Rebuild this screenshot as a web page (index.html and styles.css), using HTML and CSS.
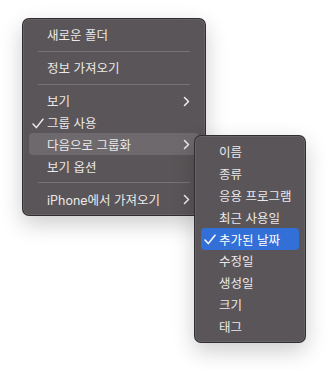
FILE: index.html
```html
<!DOCTYPE html>
<html>
<head>
  <title>메뉴</title>
  <link rel="stylesheet" href="styles.css">
</head>
<body>
  <div class="stage">
    <div class="menu main-menu">
      <div class="item">새로운 폴더</div>
      <div class="sep"></div>
      <div class="item">정보 가져오기</div>
      <div class="sep"></div>
      <div class="item">보기
        <svg class="chev" width="7" height="11" viewBox="0 0 7 11"><path d="M1.5 1.5 L5.5 5.5 L1.5 9.5" fill="none" stroke="currentColor" stroke-width="1.6" stroke-linecap="round" stroke-linejoin="round"/></svg>
      </div>
      <div class="item">
        <svg class="check" width="12" height="11" viewBox="0 0 12 11"><path d="M1 6 L4.3 9.6 L11 1.2" fill="none" stroke="currentColor" stroke-width="1.5" stroke-linecap="round" stroke-linejoin="round"/></svg>
        그룹 사용
      </div>
      <div class="item hover">다음으로 그룹화
        <svg class="chev" width="7" height="11" viewBox="0 0 7 11"><path d="M1.5 1.5 L5.5 5.5 L1.5 9.5" fill="none" stroke="currentColor" stroke-width="1.6" stroke-linecap="round" stroke-linejoin="round"/></svg>
      </div>
      <div class="item">보기 옵션</div>
      <div class="sep"></div>
      <div class="item">iPhone에서 가져오기
        <svg class="chev" width="7" height="11" viewBox="0 0 7 11"><path d="M1.5 1.5 L5.5 5.5 L1.5 9.5" fill="none" stroke="currentColor" stroke-width="1.6" stroke-linecap="round" stroke-linejoin="round"/></svg>
      </div>
    </div>

    <div class="menu sub-menu">
      <div class="item">이름</div>
      <div class="item">종류</div>
      <div class="item">응용 프로그램</div>
      <div class="item">최근 사용일</div>
      <div class="item selected">
        <svg class="check" width="12" height="11" viewBox="0 0 12 11"><path d="M1 6 L4.3 9.6 L11 1.2" fill="none" stroke="currentColor" stroke-width="1.5" stroke-linecap="round" stroke-linejoin="round"/></svg>
        추가된 날짜
      </div>
      <div class="item">수정일</div>
      <div class="item">생성일</div>
      <div class="item">크기</div>
      <div class="item">태그</div>
    </div>
  </div>
</body>
</html>
```

FILE: styles.css
```css
body {
  margin: 0;
  background-color: white;
  font-family: Inter, "Noto Sans CJK KR", sans-serif;
  font-size: 12.5px;
  color: #ebe9ea;
}

.stage {
  position: relative;
  width: 328px;
  height: 370px;
  padding: 18px 0 0 22px;
  box-sizing: border-box;
}

.menu {
  background-color: #5a5558;
  border: 1px solid rgba(0, 0, 0, 0.45);
  border-radius: 7px;
  box-shadow: inset 0 0 0 1px rgba(255, 255, 255, 0.08), 0 8px 22px rgba(0, 0, 0, 0.2);
  box-sizing: border-box;
  padding: 5px 6px;
  display: flex;
  flex-direction: column;
}

.main-menu {
  width: 184px;
  height: 198px;
}

.sub-menu {
  position: absolute;
  left: 194px;
  top: 135px;
  width: 112px;
  height: 208px;
}

.item {
  position: relative;
  height: 22px;
  display: flex;
  align-items: center;
  padding-left: 18px;
  border-radius: 4px;
  white-space: nowrap;
}

.item.hover {
  background-color: #6e696c;
}

.item.selected {
  background-color: #3270d8;
  color: white;
}

.check {
  position: absolute;
  left: 3px;
  top: 6px;
}

.chev {
  position: absolute;
  right: 9px;
  top: 6px;
}

.sep {
  height: 1px;
  background-color: #767174;
  margin: 5px 9px 5px 9px;
}
```
